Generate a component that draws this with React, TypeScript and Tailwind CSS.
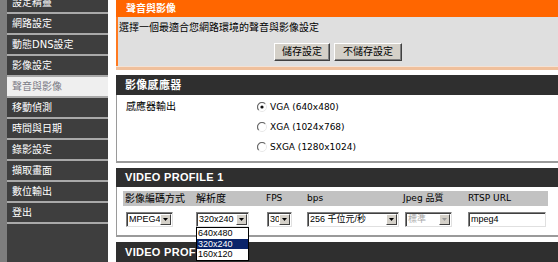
import React from "react";

const F = "font-['DejaVu_Sans','Noto_Sans_CJK_TC',sans-serif]";

const menu = [
  "設定精靈",
  "網路設定",
  "動態DNS設定",
  "影像設定",
  "聲音與影像",
  "移動偵測",
  "時間與日期",
  "錄影設定",
  "擷取畫面",
  "數位輸出",
  "登出",
];

function Radio({ checked }: { checked?: boolean }) {
  return (
    <svg width="10" height="10" viewBox="0 0 10 10" className="shrink-0">
      <circle cx="5" cy="5" r="4.5" fill="#fff" />
      <path d="M8.2 1.8 A4.5 4.5 0 0 0 1.8 8.2" fill="none" stroke="#6a6a6a" strokeWidth="1.2" />
      <path d="M1.8 8.2 A4.5 4.5 0 0 0 8.2 1.8" fill="none" stroke="#e8e8e8" strokeWidth="1" />
      {checked && <circle cx="5" cy="5" r="1.6" fill="#111" />}
    </svg>
  );
}

function Arrow({ disabled }: { disabled?: boolean }) {
  return (
    <div className="flex h-full w-[11px] shrink-0 items-center justify-center border border-t-white border-l-white border-b-[#404040] border-r-[#404040] bg-[#d4d0c8]">
      <svg width="5" height="3" viewBox="0 0 5 3">
        <path d="M0 0 H5 L2.5 3 Z" fill={disabled ? "#9a9a9a" : "#000"} />
      </svg>
    </div>
  );
}

function Select({
  w,
  text,
  disabled,
  children,
}: {
  w: string;
  text: React.ReactNode;
  disabled?: boolean;
  children?: React.ReactNode;
}) {
  return (
    <div className={`relative ${w}`}>
      <div className="flex h-[15px] items-stretch border border-t-[#808080] border-l-[#808080] border-b-[#e0e0e0] border-r-[#e0e0e0] bg-white p-px shadow-[inset_1px_1px_0_#404040]">
        <div
          className={`flex min-w-0 flex-1 items-center whitespace-nowrap pl-[1px] font-['Liberation_Sans','Noto_Sans_CJK_TC',sans-serif] text-[9px] leading-none ${
            disabled ? "text-[#a8a8a8]" : "text-black"
          }`}
        >
          {text}
        </div>
        <Arrow disabled={disabled} />
      </div>
      {children}
    </div>
  );
}

function Button({ w, children }: { w: string; children: React.ReactNode }) {
  return (
    <div
      className={`${w} flex h-[18px] items-center justify-center border border-t-white border-l-white border-b-[#404040] border-r-[#404040] bg-[#d4d0c8] text-[10px] leading-none text-black shadow-[inset_-1px_-1px_0_#808080]`}
    >
      {children}
    </div>
  );
}

function SectionHeader({ children, h }: { children: React.ReactNode; h: string }) {
  return (
    <div
      className={`${h} flex shrink-0 items-center bg-[#2f2f2f] pl-[9px] font-['Liberation_Sans','Noto_Sans_CJK_TC',sans-serif] text-[11px] font-bold leading-none tracking-[0.3px] text-white`}
    >
      {children}
    </div>
  );
}

export default function App() {
  return (
    <div className={`flex h-[262px] w-[558px] overflow-hidden bg-white ${F}`}>
      {/* left strip */}
      <div className="w-[7px] shrink-0 bg-[#7d7d7d]" />
      {/* sidebar */}
      <div className="w-[101px] shrink-0 bg-[#3e3e3e]">
        <div className="-mt-[7px] flex flex-col">
          {menu.map((m) => {
            const sel = m === "聲音與影像";
            return (
              <React.Fragment key={m}>
                <div
                  className={`flex h-[19px] items-center pl-[5px] text-[10px] leading-none ${
                    sel ? "bg-[#efefef] text-[#7c7c86]" : "text-white"
                  }`}
                >
                  {m}
                </div>
                <div className="h-[2px] bg-[#a9a9a9]" />
              </React.Fragment>
            );
          })}
        </div>
      </div>
      {/* gap */}
      <div className="w-[8px] shrink-0 bg-white" />
      {/* main */}
      <div className="flex w-[442px] shrink-0 flex-col">
        {/* orange box */}
        <div className="flex h-[17px] shrink-0 items-center bg-[#ff6600] pl-[10px] text-[10px] font-bold leading-none text-white">
          聲音與影像
        </div>
        <div className="flex h-[49px] shrink-0 flex-col border-l-2 border-[#ff7a20] bg-[#dfdfdf]">
          <div className="pl-[1px] pt-[5px] text-[10px] leading-[12px] text-black">
            選擇一個最適合您網路環境的聲音與影像設定
          </div>
          <div className="mt-[9px] flex justify-center gap-[4px]">
            <Button w="w-[56px]">儲存設定</Button>
            <Button w="w-[68px]">不儲存設定</Button>
          </div>
        </div>
        <div className="h-px shrink-0 bg-[#f3e2d6]" />
        <div className="h-[3px] shrink-0 bg-[#f0c09c]" />
        <div className="h-[5px] shrink-0" />

        {/* image sensor */}
        <SectionHeader h="h-[20px]">影像感應器</SectionHeader>
        <div className="flex h-[68px] shrink-0 border-b-2 border-l border-[#9a9a9a] pt-[2px]">
          <div className="w-[140px] pl-[9px]">
            <div className="flex h-[20px] items-center text-[10px] leading-none text-black">
              感應器輸出
            </div>
          </div>
          <div className="flex flex-col">
            {[
              ["VGA (640x480)", true],
              ["XGA (1024x768)", false],
              ["SXGA (1280x1024)", false],
            ].map(([t, c]) => (
              <div key={t as string} className="flex h-[20px] items-center gap-[3px] text-[9px] leading-none text-black">
                <Radio checked={c as boolean} />
                <span>{t as string}</span>
              </div>
            ))}
          </div>
        </div>
        <div className="h-[5px] shrink-0" />

        {/* video profile 1 */}
        <SectionHeader h="h-[19px]">VIDEO PROFILE 1</SectionHeader>
        <div className="relative z-10 flex h-[50px] shrink-0 flex-col border-b-2 border-l border-[#9a9a9a] pl-[6px] pt-[4px]">
          <div className="grid h-[15px] w-[425px] grid-cols-[71px_70px_41px_96px_65px_1fr] items-center bg-[#c2c2c2] pl-[2px] text-black">
            <span className="text-[10px] leading-none">影像編碼方式</span>
            <span className="text-[10px] leading-none">解析度</span>
            <span className="text-[9px] leading-none">FPS</span>
            <span className="text-[9px] leading-none">bps</span>
            <span className="text-[9px] leading-none">Jpeg 品質</span>
            <span className="text-[9px] leading-none">RTSP URL</span>
          </div>
          <div className="mt-[6px] grid grid-cols-[71px_70px_41px_96px_65px_1fr] items-center pl-[2px]">
            <div className="pl-[1px]">
              <Select w="w-[47px]" text="MPEG4" />
            </div>
            <div>
              <Select w="w-[53px]" text="320x240">
                <div className="absolute left-0 top-[15px] z-20 w-[53px] border border-black bg-white font-['Liberation_Sans',sans-serif] text-[9px] leading-[10.5px] text-black">
                  <div className="h-[10.5px] pl-[1px]">640x480</div>
                  <div className="h-[10.5px] bg-[#0a246a] pl-[1px] text-white">320x240</div>
                  <div className="h-[10.5px] pl-[1px]">160x120</div>
                </div>
              </Select>
            </div>
            <div className="pl-[1px]">
              <Select w="w-[25px]" text="30" />
            </div>
            <div>
              <Select w="w-[92px]" text="256 千位元/秒" />
            </div>
            <div className="pl-[2px]">
              <Select w="w-[47px]" text="標準" disabled />
            </div>
            <div>
              <div className="flex h-[15px] w-[78px] items-center border border-t-[#808080] border-l-[#808080] border-b-[#e0e0e0] border-r-[#e0e0e0] bg-white pl-[2px] font-['Liberation_Sans',sans-serif] text-[9px] leading-none text-black shadow-[inset_1px_1px_0_#404040]">
                mpeg4
              </div>
            </div>
          </div>
        </div>
        <div className="h-[5px] shrink-0" />
        <SectionHeader h="h-[20px]">VIDEO PROFILE 2</SectionHeader>
        <div className="flex-1" />
      </div>
    </div>
  );
}
